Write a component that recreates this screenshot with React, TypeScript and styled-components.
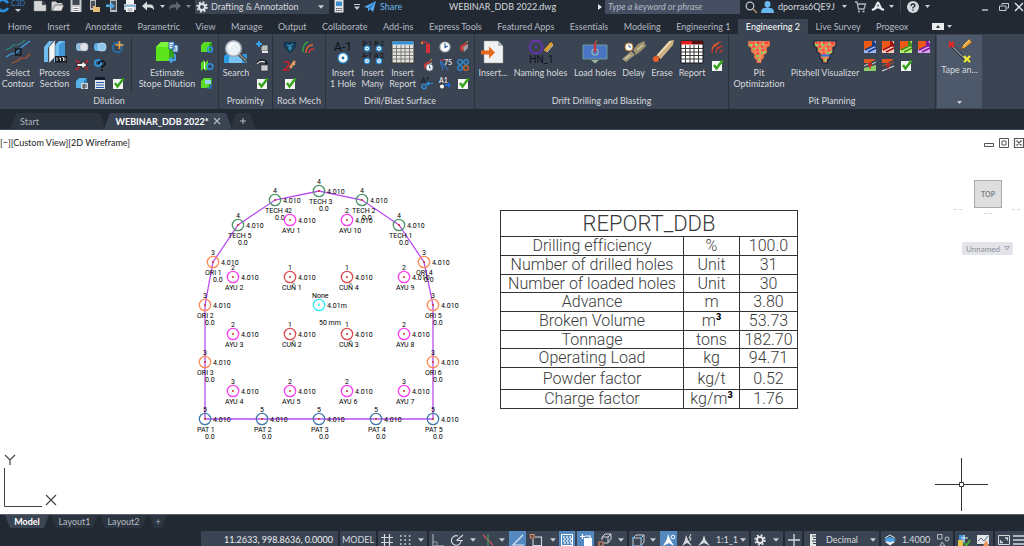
import React from "react";
import styled, { createGlobalStyle, css } from "styled-components";

const GlobalStyle = createGlobalStyle`
  * { box-sizing: border-box; }
  body { margin: 0; background: #222933; font-variant-ligatures: none; }
  body, button, input, select { font-family: Lato, "Open Sans", sans-serif; font-size: 9px; }
  button { appearance: none; border: 0; padding: 0; margin: 0; background: none; color: inherit; cursor: pointer; font-variant-ligatures: none; }
  svg { display: block; flex: none; overflow: visible; }
`;

const Page = styled.div`
  min-height: 100vh;
  display: flex;
  flex-direction: column;
  background: #222933;
  color: #d5d9de;
  overflow: hidden;
`;

/* ---------- title bar ---------- */

const TitleBar = styled.header`
  display: flex;
  align-items: center;
  height: 13px;
  margin-bottom: 6px;
  white-space: nowrap;
`;
const Cell = styled.div<{ $w: number }>`
  width: ${(p) => p.$w}px;
  height: 13px;
  flex: none;
  display: flex;
  align-items: center;
  justify-content: center;
`;
const CellButton = styled.button<{ $w: number }>`
  width: ${(p) => p.$w}px;
  height: 13px;
  flex: none;
  display: flex;
  align-items: center;
  justify-content: center;
`;
const AppLogo = styled.button`
  display: flex;
  align-items: flex-start;
  width: 31px;
  height: 13px;
  flex: none;
`;
const Workspace = styled.label`
  display: flex;
  align-items: center;
  width: 134px;
  height: 14px;
  flex: none;
  padding: 0 5px 0 1px;
  gap: 3px;
  background: #3b4453;
`;
const PlainSelect = styled.select`
  appearance: none;
  flex: 1;
  min-width: 0;
  height: 13px;
  border: 0;
  padding: 0;
  background: none;
  color: #d5d9de;
`;
const Share = styled.button`
  display: flex;
  align-items: center;
  gap: 4px;
  width: 41px;
  color: #6cb8ea;
`;
const FileName = styled.div`
  flex: 1;
  text-align: center;
  padding-left: 6px;
`;
const SearchInput = styled.input`
  width: 135px;
  height: 14px;
  border: 0;
  padding: 0 3px;
  background: #454f61;
  color: #d5d9de;
  font-style: italic;
  &::placeholder { color: #b4bac3; opacity: 1; }
`;
const Account = styled.button`
  display: flex;
  align-items: center;
  gap: 4px;
  width: 76px;
`;
const Divider = styled.span`
  width: 1px;
  height: 13px;
  background: #3b4453;
`;

/* ---------- ribbon ---------- */

const RibbonTabs = styled.nav`
  display: flex;
  height: 15px;
  padding-bottom: 1px;
`;
const RibbonTabList = styled.div`
  display: flex;
  flex: 0 1 916px;
`;
const RibbonTab = styled.button<{ $on?: boolean }>`
  flex: 1 0 auto;
  height: 15px;
  padding: 0 6px;
  line-height: 15px;
  white-space: nowrap;
  color: ${(p) => (p.$on ? "#ffffff" : "#b4bac2")};
  background: ${(p) => (p.$on ? "#3b4453" : "none")};
`;
const RibbonToggle = styled.button`
  display: flex;
  align-items: center;
  gap: 3px;
  margin-left: 16px;
`;
const Ribbon = styled.div`
  display: flex;
  height: 75px;
  background: #3b4453;
`;
const Group = styled.section<{ $w: number }>`
  width: ${(p) => p.$w}px;
  flex: none;
  display: flex;
  flex-direction: column;
  border-right: 1px solid #2b323d;
`;
const GroupBody = styled.div<{ $pad?: number }>`
  display: flex;
  height: 59px;
  padding: 4px 0 0 ${(p) => p.$pad ?? 0}px;
`;
const GroupTitle = styled.div`
  text-align: center;
  line-height: 16px;
`;
const BigButton = styled.button<{ $w: number }>`
  display: flex;
  flex-direction: column;
  align-items: center;
  width: ${(p) => p.$w}px;
  flex: none;
  height: 52px;
  padding-top: 2px;
  line-height: 11px;
  white-space: nowrap;
  svg { margin-bottom: 3px; }
`;
const Tools = styled.div<{ $cols: number }>`
  display: grid;
  grid-template-columns: repeat(${(p) => p.$cols}, 18px);
  grid-auto-rows: 18px;
  flex: none;
`;
const toolBox = css`
  display: flex;
  align-items: center;
  justify-content: center;
`;
const Tool = styled.button`${toolBox}`;
const TickLabel = styled.label`
  ${toolBox}
  position: relative;
`;
const HiddenInput = styled.input`
  position: absolute;
  opacity: 0;
  margin: 0;
`;
const InnerRule = styled.span`
  width: 1px;
  height: 55px;
  margin: 0 4px;
  background: #2b323d;
`;
const TapePanel = styled.button`
  display: flex;
  flex-direction: column;
  align-items: center;
  width: 45px;
  height: 73px;
  margin: 1px;
  padding: 4px 0;
  background: #4d596b;
  line-height: 13px;
  svg:last-child { margin-top: auto; }
`;

/* ---------- document tabs ---------- */

const FileTabs = styled.nav`
  display: flex;
  align-items: flex-end;
  height: 21px;
  padding-left: 10px;
  border-bottom: 1px solid #3b4453;
`;
const FileTab = styled.button<{ $w: number; $on?: boolean }>`
  display: flex;
  align-items: center;
  justify-content: ${(p) => (p.$on ? "center" : "flex-start")};
  gap: 6px;
  width: ${(p) => p.$w}px;
  height: 16px;
  padding: 0 10px;
  margin-right: -2px;
  border-radius: 8px 8px 0 0;
  white-space: nowrap;
  clip-path: polygon(6px 0, calc(100% - 6px) 0, 100% 100%, 0 100%);
  color: ${(p) => (p.$on ? "#ffffff" : "#aeb4bd")};
  font-weight: ${(p) => (p.$on ? 700 : 400)};
  background: ${(p) => (p.$on ? "#3b4453" : "#2c343f")};
`;

/* ---------- drawing canvas ---------- */

const Canvas = styled.main`
  position: relative;
  flex: 1;
  min-height: 384px;
  background: #ffffff;
  color: #111111;
  overflow: hidden;
`;
const CanvasBar = styled.div`
  display: flex;
  justify-content: space-between;
  align-items: center;
  height: 25px;
`;
const ViewLabel = styled.div`
  color: #222222;
`;
const WindowButtons = styled.div`
  display: flex;
  gap: 5px;
`;
const BlastPlan = styled.svg`
  position: absolute;
  left: 190px;
  top: 40px;
`;
const ReportTable = styled.table`
  position: absolute;
  left: 500px;
  top: 80px;
  width: 298px;
  table-layout: fixed;
  border-collapse: collapse;
  font-family: Roboto, Lato, sans-serif;
  font-size: 16px;
  font-weight: 300;
  line-height: 16px;
  color: #3a3a3a;
  th, td {
    border: 1px solid #333333;
    padding: 0;
    text-align: center;
    font-weight: 300;
    white-space: nowrap;
    overflow: hidden;
  }
  thead th { font-size: 22px; height: 26px; line-height: 24px; }
  sup { font-size: 9px; line-height: 0; font-weight: 900; color: #000000; }
`;
const ReportRow = styled.tr<{ $h: number }>`
  height: ${(p) => p.$h}px;
`;
const Cube = styled.button`
  position: absolute;
  right: 22px;
  top: 50px;
  width: 28px;
  height: 28px;
  border: 1px solid #a8a8a8;
  background: #dedede;
  color: #7b8288;
  font-size: 7px;
  font-weight: 700;
`;
const Compass = styled.svg`
  position: absolute;
  right: 2px;
  top: 77px;
`;
const UcsButton = styled.button`
  position: absolute;
  right: 11px;
  top: 112px;
  display: flex;
  align-items: center;
  gap: 4px;
  width: 51px;
  height: 13px;
  padding: 0 4px;
  border-radius: 2px;
  background: #e3e4ea;
  color: #8d9096;
  font-size: 8px;
`;
const UcsIcon = styled.svg`
  position: absolute;
  left: 0;
  bottom: 0;
`;
const Crosshair = styled.svg`
  position: absolute;
  left: 935px;
  top: 328px;
`;

/* ---------- bottom bars ---------- */

const LayoutTabs = styled.nav`
  display: flex;
  height: 17px;
  padding-left: 5px;
  border-top: 1px solid #5a6069;
`;
const LayoutTab = styled.button<{ $w: number; $on?: boolean }>`
  width: ${(p) => p.$w}px;
  height: 13px;
  line-height: 12px;
  border-radius: 0 0 6px 6px;
  clip-path: polygon(0 0, 100% 0, calc(100% - 5px) 100%, 5px 100%);
  margin-right: 2px;
  color: ${(p) => (p.$on ? "#ffffff" : "#b4bac2")};
  font-weight: ${(p) => (p.$on ? 700 : 400)};
  background: ${(p) => (p.$on ? "#3b4453" : "#2c343f")};
`;
const StatusBar = styled.footer`
  display: flex;
  justify-content: flex-end;
  gap: 2px;
  height: 15px;
  overflow: hidden;
`;
const StatusGroup = styled.div`
  display: flex;
  height: 18px;
  background: #3b4453;
`;
const StatusText = styled.div<{ $w: number }>`
  width: ${(p) => p.$w}px;
  height: 18px;
  line-height: 17px;
  padding-right: 5px;
  text-align: right;
  white-space: nowrap;
  color: #eef0f2;
`;
const StatusButton = styled.button<{ $w: number; $on?: boolean }>`
  display: flex;
  align-items: center;
  justify-content: center;
  width: ${(p) => p.$w}px;
  height: 17px;
  color: #d5d9de;
  background: ${(p) => (p.$on ? "#5489c0" : "none")};
`;
const StatusSelect = styled.label<{ $w: number }>`
  display: flex;
  align-items: center;
  width: ${(p) => p.$w}px;
  height: 17px;
  padding: 0 3px 0 4px;
`;

/* ---------- icons ---------- */

const Caret = ({ c = "#c9cdd3", s = 5 }: { c?: string; s?: number }) => (
  <svg width={s} height={s - 2} viewBox="0 0 6 3.6"><path d="M0 0H6L3 3.6Z" fill={c} /></svg>
);

const Svg = ({ s, children }: { s: number; children: React.ReactNode }) => (
  <svg width={s} height={s} viewBox={`0 0 ${s} ${s}`} fill="none">{children}</svg>
);

const Gear = ({ s = 12, c = "#e3e6e9" }) => (
  <svg width={s} height={s} viewBox="0 0 12 12" fill="none" stroke={c}>
    <circle cx="6" cy="6" r="3" strokeWidth="2" />
    <circle cx="6" cy="6" r="4.8" strokeWidth="1.8" strokeDasharray="1.9 1.87" />
  </svg>
);

const titleIcons: Record<string, React.ReactNode> = {
  New: <path d="M1 1H9L13 5V11H1ZM9 1V5H13" fill="#d6d6d6" stroke="#8e9399" strokeWidth=".6" />,
  Open: <><path d="M1 11V2H5L6 3.5H11V5" fill="#d6d6d6" stroke="#c9c9c9" /><path d="M1 11L4 5H13L10.500 11Z" fill="#e2e2e2" stroke="#33373d" strokeWidth=".6" /></>,
  Save: <><path d="M1.500 0H12.500V12H1.500Z" fill="#c6c8ca" /><path d="M3.500 0H10.500V5H3.500Z" fill="#3f464f" /><path d="M3.500 7H10.500V12H3.500Z" fill="#f4f4f4" /><path d="M4.500 8.500H9.500M4.500 10.500H9.500" stroke="#666" strokeWidth=".8" /></>,
  "Open from mobile": <><path d="M3 0H9V10H3Z" fill="#b9bcc0" /><path d="M4 1H8V8H4Z" fill="#4a515b" /><path d="M6 6H8L9 7H13V12H6Z" fill="#e6bd73" /></>,
  "Save to mobile": <><path d="M5 0H12V12H5Z" fill="#b9bcc0" /><path d="M6 1H11V10H6Z" fill="#4a515b" /><path d="M1 4.500H6V2.500L10 6L6 9V7H1Z" fill="#4aa9e6" /></>,
  Plot: <><path d="M3 0H11V5H3Z" fill="#f3f3f3" /><path d="M1 4H13V10H1Z" fill="#c9ccd0" /><path d="M3 7H11V12H3Z" fill="#fff" /><path d="M1 6H13" stroke="#4b9fdc" /><path d="M4.500 9H9.500M4.500 10.800H9.500" stroke="#777" strokeWidth=".8" /></>,
  Undo: <path d="M1 6L6 1.500V4.500H10Q13 5 13 10Q11.500 7.500 9 7.500H6V10.500Z" fill="#dadde0" />,
  Redo: <path d="M13 6L8 1.500V4.500H4Q1 5 1 10Q2.500 7.500 5 7.500H8V10.500Z" fill="#5d6571" />,
  Calculator: <><path d="M2.500 0H11.500V12.500H2.500Z" fill="#e3e5e7" /><path d="M4 1.500H10V6H4Z" fill="#3b8fd0" /><path d="M4 8.500H10M4 10.500H10" stroke="#555" strokeDasharray="1.500 .7" /></>,
};

const tb = (name: string, w: number) => (
  <CellButton key={name} $w={w} aria-label={name}><Svg s={14}>{titleIcons[name]}</Svg></CellButton>
);

const Pit = ({ blue = false }: { blue?: boolean }) => (
  <>
    <path d="M1 1H23V6L20 7.500V13L17 15V18L14.500 20V23H9.500V20L7 18V14L4 12V8L1 6Z" fill="#f2784f" stroke={blue ? "#10283e" : "#6b4a45"} strokeWidth={blue ? 1.200 : 0.4} />
    <path d="M3 3H7M10 3H14M17 3H21M5 6.500H9M13 6.500H18M8 10H11M15 10H18M9 13.500H12" stroke="#ff4444" strokeWidth="2.200" />
    <path d="M2 5H5M8 5H11M15 4.500H17M6 9H8M12 8.500H14M17 12H19M9 16H12M14 13H16M11 20H13" stroke="#78d651" strokeWidth="2" />
    <path d="M5 1V7M9 1V14M13 1V22M17 1V14" stroke="#e8d4a0" strokeWidth=".5" />
    {blue && <path d="M8 15.500H17" stroke="#2d6de0" strokeWidth="2" />}
  </>
);

const Dot = ({ x, y, r }: { x: number; y: number; r: number }) => (
  <>
    <circle cx={x} cy={y} r={r} fill="#fff" stroke="#2793dd" strokeWidth="1.200" />
    <circle cx={x} cy={y} r={r / 3.5} fill="#1c6fb5" />
  </>
);

const big: Record<string, React.ReactNode> = {
  contour: <>
    <path d="M0 10L4 8L7 5L12 5L17 2L19 0" stroke="#2c8a82" strokeWidth="1.200" />
    <path d="M0 17L5 14L10 13L17 6L24 1" stroke="#3aa0ea" strokeWidth="1.200" />
    <path d="M6 23L11 21L15 18L20 18L24 14" stroke="#b5562c" strokeWidth="1.200" />
    <path d="M9.500 9H15V15H9.500Z" stroke="#12181f" strokeWidth="1.400" />
  </>,
  section: <>
    <path d="M1 7L6 1H10L5 8V22H1ZM13 4L16 1H22V16L17 22H11V7Z" fill="#6fbdee" />
    <path d="M16 5L22 1V16L16 22Z" fill="#3f96d6" />
    <path d="M6 7L12 0V17L6 23Z" fill="#f6f6f6" stroke="#56616e" strokeWidth=".6" />
    <path d="M12 16H24V22.500H12Z" fill="#15181c" />
    <path d="M14 17.500V21M16 18H17.500V21M19 17.500H20.500V21M22 17.500V21" stroke="#fff" strokeWidth=".8" />
  </>,
  stope: <>
    <path d="M1 7L6 2H19L14 7V21H1Z" fill="#5be31c" /><path d="M1 7L6 2H19L14 7Z" fill="#7cf43e" /><path d="M14 7L19 2V17L14 21Z" fill="#36a80d" />
    <path d="M14 2H19V9H14ZM18 5H23V12H18Z" fill="#e8f2fb" stroke="#2463a8" strokeWidth="1" />
    <path d="M15.500 4.500H17.500M15.500 6.500H17.500M19.500 8H21.500M19.500 10H21.500" stroke="#2463a8" strokeWidth=".8" />
    <path d="M20 14V20H15M17 17.500L14.500 20L17 22.500" stroke="#4aa6ea" strokeWidth="1.800" />
  </>,
  search: <>
    <path d="M0 16L5 12H10V23H0ZM14 14H23V23H12Z" fill="#2b9ae0" /><path d="M5 17L12 14L18 19V23H5Z" fill="#78c3f0" />
    <path d="M15 14L22.500 21.500" stroke="#4c3a30" strokeWidth="3.200" /><path d="M15 14L22 21" stroke="#8a929b" strokeWidth="1.500" />
    <circle cx="9.500" cy="8.500" r="7.800" fill="#e9f1f7" stroke="#a3acb5" strokeWidth="1.600" />
    <path d="M5 8Q6 4 10 3.500" stroke="#fff" strokeWidth="2" />
  </>,
  hole: <>
    <text x="12" y="10.500" textAnchor="middle" fontSize="12" fill="#0c1015" fontFamily="Roboto">A-1</text>
    <Dot x={12} y={18} r={5} />
  </>,
  many: <>
    {[[6, "B-1", 5.5], [18, "B-2", 5.5], [6, "A-1", 17.5], [18, "A-2", 17.5]].map(([x, t, y]) => (
      <text key={String(t)} x={x} y={y} textAnchor="middle" fontSize="7" fill="#0c1015" fontFamily="Roboto">{t}</text>
    ))}
    <Dot x={6} y={8.500} r={2.600} /><Dot x={18} y={8.500} r={2.600} /><Dot x={6} y={21} r={2.600} /><Dot x={18} y={21} r={2.600} />
  </>,
  grid: <>
    <path d="M1 1H23V23H1Z" fill="#e3e3e1" stroke="#39352f" /><path d="M1.500 1.500H22.500V4.500H1.500Z" fill="#2f92dd" />
    <path d="M1 8.500H23M1 12H23M1 15.500H23M1 19H23M5.500 5V23M10 5V23M14 5V23M18.500 5V23" stroke="#7b7973" />
  </>,
  insert: <>
    <path d="M3 1H17L22 6V23H3Z" fill="#f0f1f2" stroke="#8c9197" strokeWidth=".5" /><path d="M17 1V6H22Z" fill="#b5bac0" />
    <path d="M0 10.500H8V6.500L14 12.500L8 18.500V14.500H0Z" fill="#e4691d" />
  </>,
  naming: <>
    <circle cx="7" cy="7" r="6.500" stroke="#7130c4" strokeWidth="1.400" /><circle cx="7" cy="7" r="1" fill="#7130c4" />
    <path d="M16 11L23 3" stroke="#e0a030" strokeWidth="3.200" /><path d="M18 12L24 5" stroke="#f6e3b0" strokeWidth="1" />
    <text x="12.500" y="22.500" textAnchor="middle" fontSize="10" fill="#0c1015" fontFamily="Roboto">HN_1</text>
  </>,
  load: <>
    <path d="M0 5H24V19H0Z" fill="#4a74c4" stroke="#6c9a9f" strokeWidth="1" />
    <path d="M8 20H16L12 23.500Z" fill="#9fb59a" />
    <circle cx="12" cy="12" r="3" stroke="#8fa8b8" strokeWidth="1.500" /><path d="M12 3V12" stroke="#c8343c" strokeWidth="2.400" /><path d="M12 3L14 0" stroke="#b86a30" />
  </>,
  delay: <>
    <path d="M0 19L6 14L9 11L13 15L9 18L4 22Z" fill="#a59a7c" /><path d="M11 10L16 4L22 1L24 6L19 11L14 15Z" fill="#9a916f" />
    <path d="M3 19L8 15M15 10L21 5" stroke="#cfc6a4" strokeWidth="1.600" />
    <circle cx="7" cy="7" r="4" fill="#fff" stroke="#c88438" strokeWidth="1" /><path d="M7 4.500V7H9" stroke="#4a6fa8" />
  </>,
  erase: <>
    <path d="M6 16L19 1L24 0L23 5L10 20Z" fill="#cdb083" /><path d="M7 16L21 1" stroke="#f5e2bd" strokeWidth="1.500" />
    <path d="M6 16L10 20" stroke="#2f251c" strokeWidth="2" /><circle cx="6" cy="19" r="3" fill="#e6602a" />
  </>,
  report: <>
    <path d="M1 1H23V23H1Z" fill="#fff" stroke="#17191c" /><path d="M1 1H12V4.500H1Z" fill="#e01b1b" /><path d="M12 1H23V4.500H12Z" fill="#5a0c0c" />
    <path d="M1 8.500H23M1 12H23M1 15.500H23M1 19H23M5.500 5V23M10 5V23M14 5V23M18.500 5V23" stroke="#3a3a3a" />
  </>,
  pit: <Pit />,
  pitshell: <Pit blue />,
  tape: <>
    <path d="M4 7L18 21" stroke="#1e2329" strokeWidth="3" /><path d="M4 7L18 21" stroke="#9aa3ad" strokeWidth="1.200" />
    <path d="M1 3L6 8M6 3L1 8" stroke="#ef2020" strokeWidth="2" />
    <path d="M16 17L22 23M22 17L16 23" stroke="#f5f02a" strokeWidth="2" />
    <path d="M13 10L15 6L21 0L24 3L17 9Z" fill="#eea63a" stroke="#6b4315" strokeWidth=".6" /><path d="M15 7L21.500 1" stroke="#f9dc9a" />
  </>,
};

const Cube12 = ({ c, d }: { c: string; d: string }) => (
  <><path d="M0 4L3 1H11L8 4V11H0Z" fill={c} /><path d="M8 4L11 1V8L8 11Z" fill={d} /></>
);
const RedStick = () => <><path d="M3 5L8 2L11 4L6 11L3 9Z" fill="#c33a34" /><path d="M6 6L11 3V7L7 11Z" fill="#9c9fa3" /><path d="M9 2L11 0" stroke="#e8a040" /></>;
const Bench = ({ c, d }: { c: string; d: string }) => (
  <>
    <path d="M0 0H12V12H0Z" fill={c} />
    <path d="M0 0H10L12 3V6L0 2Z" fill={d} />
    <path d="M0 0H8V5L3 9H0Z" fill="#ee5a16" />
    <path d="M1 9L11 4M4 11L12 7" stroke={d} strokeWidth="1.400" />
  </>
);

const small: Record<string, React.ReactNode> = {
  union: <><rect y="2" width="8" height="8" rx="3" fill="#8fbde0" /><rect x="4" y="2" width="8" height="8" rx="3" fill="#dfe3e6" stroke="#9ba5ae" strokeWidth=".6" /></>,
  subtract: <><rect y="2" width="8" height="8" rx="3" fill="#5fb0e6" /><rect x="4" y="2" width="8" height="8" rx="3" fill="#8fc6ec" stroke="#d9e7f2" strokeWidth=".6" /></>,
  pick: <><circle cx="5.500" cy="6.500" r="4.800" stroke="#1f78be" strokeWidth="1.400" /><path d="M7.500 0V8M3.500 4H11.500" stroke="#f2a74a" strokeWidth="1.600" /></>,
  mirror: <><path d="M0 1L5 6L0 11M12 1L8 6L12 11" stroke="#bb2430" strokeWidth="1.800" /><path d="M1 4.500H6V2L11 6L6 10V7.500H1Z" fill="#f2f2f2" stroke="#15181c" strokeWidth=".8" /></>,
  help: <><circle cx="4" cy="4" r="3" stroke="#2f93dc" strokeWidth="2" /><path d="M5 5Q5 2 8 2Q11 2 11 5Q11 6.500 8 7.500V9M8 10V12" stroke="#10151b" strokeWidth="1.600" /></>,
  solid: <><Cube12 c="#55b0ea" d="#2e83c2" /><path d="M5 6H12V12H5Z" fill="#d3d7da" /><path d="M6 8H11M6 10H11M8 7V12" stroke="#252a30" strokeWidth=".8" /></>,
  list: <><path d="M1 0H11V12H1Z" fill="#e5e7e9" /><path d="M1 0H11V3H1Z" fill="#141c2c" /><path d="M2 5.500H10M2 8H10M2 10.500H10" stroke="#1f5dae" /></>,
  greenA: <><Cube12 c="#58dc25" d="#319b0f" /><circle cx="9" cy="8.500" r="2.500" stroke="#2d93e2" strokeWidth="1.500" /></>,
  greenB: <><path d="M0 4L3 1V9L0 12ZM4 4L7 1V10L4 12Z" fill="#58dc25" /><path d="M3 3L4 2V10L3 11Z" fill="#eef2ee" /><circle cx="9" cy="7.500" r="2.800" stroke="#2d93e2" strokeWidth="1.500" /></>,
  greenC: <><Cube12 c="#58dc25" d="#319b0f" /><path d="M4 3H10V7H4Z" fill="#9bd2f3" /><path d="M10 7V11H6" stroke="#2876c4" strokeWidth="1.400" /></>,
  plusBox: <><path d="M3 0V6M0 3H6" stroke="#3aa2ea" strokeWidth="2" /><path d="M5 6L7 4H12V10H5Z" fill="#b9bcbe" stroke="#2b2f33" strokeWidth=".6" /><path d="M6 10H12V12H6Z" fill="#e6e6e6" /></>,
  rotBox: <><path d="M1 5Q4 0 9 2L11 5" stroke="#15181c" strokeWidth="2.400" /><path d="M1 5Q4 1 9 3" stroke="#f2f2f2" strokeWidth="1.200" /><path d="M5 6H12V12H5Z" fill="#c9cccd" stroke="#2b2f33" strokeWidth=".6" /></>,
  rock: <><path d="M1 1L6 2L11 1L12 5L6 12L0 5Z" fill="#15425f" stroke="#0f2d43" /><path d="M3 4L6 5L9 3M4 7L8 7M6 5V10" stroke="#4aa6d8" /></>,
  arcs: <><path d="M1 11Q1 2 6 1" stroke="#2da63c" strokeWidth="1.400" /><path d="M4 12Q4 4 11 4" stroke="#e2622a" strokeWidth="1.400" /><path d="M7 12Q7 8 12 8" stroke="#d63636" strokeWidth="1.400" /></>,
  two: <><path d="M0 4Q3 1 5 4Q5 7 0 11H6" stroke="#c8202a" strokeWidth="1.600" /><path d="M5 8L10 1L12 3L7 10Z" fill="#d98f57" /><path d="M9 4L11 6" stroke="#f4d9a9" /></>,
  fuse: <><path d="M5 3H9V12H5Z" fill="#d92f36" /><path d="M1 1Q5 0 7 3" stroke="#c2343a" strokeWidth="1.500" /><circle cx="1" cy="2" r="1.200" fill="#f0803a" /></>,
  clock: <><circle cx="6" cy="6" r="5" fill="#fff" stroke="#b0b6bd" strokeWidth="1.200" /><path d="M6 2.500V6.500L9 5" stroke="#265a9c" strokeWidth="1.200" /></>,
  stick: <RedStick />,
  stickClock: <><RedStick /><circle cx="8.500" cy="8.500" r="3.500" fill="#fff" stroke="#7f868e" /><path d="M8.500 6.500V9H10" stroke="#265a9c" /></>,
  angle: <><path d="M1 1L4 11M1 1L9 11" stroke="#2f74c8" strokeWidth="1.200" /><path d="M1 1H7" stroke="#c8323a" /><text x="5" y="6" fontSize="7" fontWeight="700" fill="#e5e7e9" fontFamily="Lato">75</text></>,
  rings: <><circle cx="3" cy="3" r="2.300" stroke="#2f8ed8" strokeWidth="1.300" /><circle cx="9" cy="3" r="2.300" stroke="#2f8ed8" strokeWidth="1.300" /><circle cx="3" cy="9" r="2.300" stroke="#2f8ed8" strokeWidth="1.300" /><circle cx="9" cy="9" r="2.300" stroke="#d0632c" strokeWidth="1.300" /></>,
  a1in: <><text x="0" y="6" fontSize="7" fill="#10151b" fontFamily="Lato">A1</text><circle cx="3" cy="9.500" r="2.200" stroke="#2f8ed8" strokeWidth="1.300" /><path d="M12 6H8V4L5 6.500L8 9V7H12Z" fill="#2b90e0" /></>,
  a1out: <><text x="0" y="6" fontSize="7" fill="#fff" fontFamily="Lato">A1</text><circle cx="3" cy="9.500" r="2" fill="#fff" /><path d="M6 7H9V5L12 8L9 11V9H6Z" fill="#1e6be0" /></>,
  branches: <><path d="M1 12Q1 5 4 3M4 6Q7 1 10 1M5 12Q5 7 8 6M7 8Q9 5 12 5M9 12Q9 10 12 9" stroke="#d8392a" strokeWidth="1.200" /><path d="M1 8L5 3L8 2" stroke="#ea7a32" /></>,
  benchBlue: <Bench c="#9fb9f0" d="#1b3a86" />,
  benchRed: <Bench c="#f8c9be" d="#a01010" />,
  benchGreen: <Bench c="#b6ee76" d="#3f8a1c" />,
  benchPurple: <Bench c="#dfa2ee" d="#7a1c9c" />,
  raiseA: <><path d="M0 0H12L6 4H0Z" fill="#e2571d" /><path d="M0 9L12 6V12H0Z" fill="#8ecb6c" /><path d="M6 10V4M4 6.500L6 4L8 6.500" stroke="#dd2020" strokeWidth="1.400" /><path d="M0 7L4 5M8 5L12 3" stroke="#d9dcdf" /></>,
  raiseB: <><path d="M0 0H12L6 4H0Z" fill="#e2571d" /><path d="M0 12L12 7" stroke="#d9dcdf" strokeWidth="1.200" /><path d="M6 10V4M4 6.500L6 4L8 6.500" stroke="#dd2020" strokeWidth="1.400" /><path d="M0 7L5 5M8 5L12 3" stroke="#b5552f" /></>,
};

const Tick = ({ label }: { label: string }) => (
  <TickLabel>
    <HiddenInput type="checkbox" defaultChecked aria-label={label} />
    <Svg s={12}>
      <path d="M1 2H11V12H1Z" fill="#f3f4f3" />
      <path d="M3 6L5.500 9.500L11.500 1.500" stroke="#35a31a" strokeWidth="2.400" />
    </Svg>
  </TickLabel>
);

const ToolGrid = ({ cols, items, label }: { cols: number; items: string[]; label: string }) => (
  <Tools $cols={cols}>
    {items.map((k, i) =>
      k === "tick" ? <Tick key={i} label={`${label} settings`} /> :
      k === "" ? <span key={i} /> :
      <Tool key={i} aria-label={k}><Svg s={12}>{small[k]}</Svg></Tool>
    )}
  </Tools>
);

const Cmd = ({ w, icon, a, b }: { w: number; icon: string; a: string; b?: string }) => (
  <BigButton $w={w}><Svg s={24}>{big[icon]}</Svg><span>{a}</span>{b && <span>{b}</span>}</BigButton>
);

/* ---------- data ---------- */

const ribbonTabs = ["Home", "Insert", "Annotate", "Parametric", "View", "Manage", "Output", "Collaborate", "Add-ins", "Express Tools", "Featured Apps", "Essentials", "Modeling", "Engineering 1", "Engineering 2", "Live Survey", "Progeox"];

const GREEN = "#4a9468", ORANGE = "#ff8a55", PINK = "#fb3df3", RED = "#dc4b50", BLUE = "#4179ab";

type Hole = [number, number, string, string, string];
const holes: Hole[] = [
  [129, 21, "4", "TECH 3", GREEN], [85, 30, "4", "TECH 4", GREEN], [48, 55, "4", "TECH 5", GREEN],
  [172, 30, "4", "TECH 2", GREEN], [209, 55, "4", "TECH 1", GREEN],
  [23, 92, "3", "ORI 1", ORANGE], [234, 92, "3", "ORI 4", ORANGE], [15, 135, "3", "ORI 2", ORANGE],
  [243, 135, "3", "ORI 5", ORANGE], [15, 192, "3", "ORI 3", ORANGE], [243, 192, "3", "ORI 6", ORANGE],
  [15, 249, "5", "PAT 1", BLUE], [72, 249, "5", "PAT 2", BLUE], [129, 249, "5", "PAT 3", BLUE],
  [186, 249, "5", "PAT 4", BLUE], [243, 249, "5", "PAT 5", BLUE],
  [100, 50, "2", "AYU 1", PINK], [157, 50, "2", "AYU 10", PINK], [43, 107, "2", "AYU 2", PINK],
  [214, 107, "2", "AYU 9", PINK], [43, 164, "2", "AYU 3", PINK], [214, 164, "2", "AYU 8", PINK],
  [43, 221, "3", "AYU 4", PINK], [100, 221, "2", "AYU 5", PINK], [157, 221, "2", "AYU 6", PINK], [214, 221, "3", "AYU 7", PINK],
  [100, 107, "1", "CUÑ 1", RED], [157, 107, "1", "CUÑ 4", RED], [100, 164, "1", "CUÑ 2", RED], [157, 164, "1", "CUÑ 3", RED],
];

const HoleMark = ({ h: [x, y, n, name, c] }: { h: Hole }) => {
  const contour = c === GREEN || c === ORANGE || c === BLUE;
  return (
    <g>
      <circle cx={x} cy={y} r="5.700" fill="none" stroke={c} strokeWidth="1.300" />
      <path d={`M${x - 1} ${y}h2`} stroke="#c63a20" strokeWidth="1.500" />
      <text x={x - 2} y={y - 7}>{n}</text>
      <text x={x + 8} y={y + 3}>4.010</text>
      <text x={c === GREEN ? x - 10 : x - 8} y={y + 13}>{name}</text>
      {contour && <text x={x} y={y + 20}>0.0</text>}
    </g>
  );
};

const report: [React.ReactNode, React.ReactNode, string, number][] = [
  ["Drilling efficiency", "%", "100.0", 19],
  ["Number of drilled holes", "Unit", "31", 19],
  ["Number of loaded holes", "Unit", "30", 18],
  ["Advance", "m", "3.80", 19],
  ["Broken Volume", <>m<sup>3</sup></>, "53.73", 19],
  ["Tonnage", "tons", "182.70", 18],
  ["Operating Load", "kg", "94.71", 19],
  ["Powder factor", "kg/t", "0.52", 22],
  ["Charge factor", <>kg/m<sup>3</sup></>, "1.76", 19],
];

const st: Record<string, React.ReactNode> = {
  grid: <path d="M3.500 0V12M8.500 0V12M0 3.500H12M0 8.500H12" stroke="#d5d9de" strokeWidth="1.200" />,
  snap: <path d="M1 2H12M1 6H12M1 10H12" stroke="#d5d9de" strokeWidth="1.600" strokeDasharray="1.600 2.800" />,
  ortho: <><path d="M1 0V12H12" stroke="#9aa1aa" strokeWidth="1.300" /><path d="M1 8H5V12" stroke="#9aa1aa" /></>,
  polar: <><path d="M10 6A4.800 4.800 0 1 1 7 2M5.500 6.500L12 1M5.500 6.500H12" stroke="#d5d9de" strokeWidth="1.100" /></>,
  iso: <><path d="M1 1L11 11" stroke="#d4505a" strokeWidth="1.200" /><path d="M6 0V12" stroke="#4c9a5c" strokeWidth="1.200" /></>,
  track: <path d="M11 1L1 11H12" stroke="#dfe8f2" strokeWidth="1.200" />,
  osnap: <><path d="M5 3H11.500V11.500H3V5" stroke="#d5d9de" strokeWidth="1.100" /><path d="M.5 .5H4V4H.5Z" stroke="#e58a5c" strokeWidth="1.200" /></>,
  trans: <><path d="M.5 .5H11.500V11.500H.5Z" stroke="#fff" /><path d="M2 3H10M2 7H10M3 5H11M3 9H11" stroke="#fff" strokeWidth="1.600" strokeDasharray="1.600 1.600" /></>,
  cycle: <><path d="M4 4H12V12H4Z" fill="#fff" /><path d="M0 2.500H5M2.500 0V5M5 2H10V4" stroke="#fff" strokeWidth="1.200" /></>,
  snap3d: <><path d="M3 3L6 0H12V5L9 9H5M3 3H9V8M9 3L12 0M3 3V6" stroke="#d5d9de" /><path d="M0 8H4V12H0Z" stroke="#e58a5c" strokeWidth="1.200" /></>,
  ucs: <><path d="M1 4L4 1H12V8L9 12H1ZM1 4H9V12M9 4L12 1" stroke="#c9cdd3" /><path d="M0 3H2V5H0ZM8 3H10V5H8ZM0 11H2V13H0ZM8 11H10V13H8Z" fill="#4aa6ea" /></>,
  annoOn: <><path d="M5 0L7 5L11 12L6 9L0 12L4 5Z" fill="#fff" /><circle cx="10" cy="3" r="1.800" stroke="#fff" /></>,
  anno: <><path d="M5 1L7 6L11 12L6 9L1 12L4 6Z" fill="#d5d9de" /><path d="M10 0L8 4H10L9 7" stroke="#d5d9de" /></>,
  annoA: <path d="M6 1L7.500 6L12 12L6 9L0 12L4.500 6Z" fill="#d5d9de" />,
  plus: <path d="M6 0V12M0 6H12" stroke="#d5d9de" strokeWidth="1.300" />,
  ruler: <><path d="M3 0H9V13H3Z" fill="#e3e5e7" /><path d="M5 2H9M6 4.500H9M5 7H9M6 9.500H9" stroke="#3b4453" /></>,
  layers: <><path d="M1 8L6 5L11 8L6 11.500Z" fill="#e8eaec" /><path d="M0 6Q6 0 12 6Q6 10 0 6Z" fill="#4aa0e6" /><path d="M1 4L6 1L11 4" stroke="#e8eaec" /></>,
  shapes: <><path d="M.5 .5H5V5H.5Z" stroke="#b9bec5" /><circle cx="10" cy="5" r="2" stroke="#b9bec5" /><path d="M3 12L5 8L8 12Z" stroke="#b9bec5" /></>,
  cad: <><path d="M1 1H7V9H1Z" fill="#3f8fd6" /><path d="M0 6H5V12H0Z" fill="#ecc04c" /><path d="M3 4H10M6 1V8" stroke="#e6eef6" /><path d="M6 9L8.500 11.500L12 6" stroke="#4aa83a" strokeWidth="2" /></>,
  perf: <><path d="M0 1H12V10H0Z" fill="#e3e5e7" /><path d="M1 7L4 4L7 7L11 2" stroke="#59728c" /><path d="M9 6L12 12H6Z" fill="#ee9458" /></>,
  full: <><path d="M.5 1.500H11.500V10.500H.5Z" stroke="#d5d9de" /><path d="M7 4H9.500V6.500M2.500 6V8.500H5" stroke="#d5d9de" strokeWidth="1.300" /></>,
  menu: <path d="M0 2H12M0 6H12M0 10H12" stroke="#d5d9de" strokeWidth="1.500" />,
};

const S = ({ k, w, on }: { k: string; w: number; on?: boolean }) => (
  <StatusButton $w={w} $on={on} aria-label={k}><Svg s={12}>{st[k]}</Svg></StatusButton>
);
const Drop = ({ w = 12 }: { w?: number }) => <StatusButton $w={w} aria-label="More options"><Caret s={6} /></StatusButton>;

export default function App() {
  return (
    <Page>
      <GlobalStyle />
      <TitleBar>
        <AppLogo aria-label="Application menu">
          <svg width="27" height="13" viewBox="0 0 27 13" fill="none">
            <path d="M8 3Q5-1 1 0Q-3 3-2 7Q0 12 4 11Q7 10 8 8" stroke="#2b8fe0" strokeWidth="2.600" />
            <text x="11" y="6" fontSize="7" fill="#3c7fc0" fontFamily="Lato">C3D</text>
            <path d="M15 9H21L18 12Z" fill="#c9cdd3" />
          </svg>
        </AppLogo>
        {["New", "Open", "Save", "Open from mobile", "Save to mobile", "Plot", "Undo"].map((n) => tb(n, 18))}
        <Cell $w={11}><Caret /></Cell>
        {tb("Redo", 14)}
        <Cell $w={13}><Caret c="#7d858f" /></Cell>
        <Workspace>
          <Gear />
          <PlainSelect aria-label="Workspace"><option>Drafting &amp; Annotation</option></PlainSelect>
          <Caret s={6} />
        </Workspace>
        {tb("Calculator", 20)}
        <Cell $w={15}><svg width="6" height="6" viewBox="0 0 6 6"><path d="M0 0H6V1H0ZM0 2.500H6L3 6Z" fill="#c9cdd3" /></svg></Cell>
        <Share>
          <svg width="12" height="11" viewBox="0 0 12 11"><path d="M0 6L12 0L9 11L6 8L4 10.500V7Z" fill="#55aaf0" /><path d="M4 7L12 0L6 8Z" fill="#2874b4" /></svg>
          Share
        </Share>
        <FileName>WEBINAR_DDB 2022.dwg</FileName>
        <Cell $w={11}><svg width="4" height="6" viewBox="0 0 4 6"><path d="M0 0V6L4 3Z" fill="#e3e6e9" /></svg></Cell>
        <SearchInput placeholder="Type a keyword or phrase" aria-label="Search help" />
        <CellButton $w={21} aria-label="Search"><Svg s={12}><circle cx="5" cy="5" r="3.800" stroke="#c0c5cb" strokeWidth="1.300" /><path d="M8 8L12 12" stroke="#a58a6a" strokeWidth="1.600" /></Svg></CellButton>
        <Account>
          <svg width="13" height="12" viewBox="0 0 13 12"><path d="M3.500 3Q3.500 0 6.500 0Q9.500 0 9.500 3Q9.500 6.500 6.500 7Q3.500 6.500 3.500 3ZM0 12Q0 7 4 7H9Q13 7 13 12Z" fill="#69b7ef" /></svg>
          dporras6QE9J
        </Account>
        <Cell $w={14}><Caret /></Cell>
        <CellButton $w={18} aria-label="Cart"><Svg s={12}><path d="M1 1H3L4.500 8H10L11.500 3H4" stroke="#aeb4bb" strokeWidth="1.300" /><circle cx="5" cy="10.500" r="1.100" fill="#aeb4bb" /><circle cx="9.500" cy="10.500" r="1.100" fill="#aeb4bb" /></Svg></CellButton>
        <CellButton $w={18} aria-label="Autodesk apps"><Svg s={12}><path d="M6 1L2 9M6 1L10 9M0 9L6 6L12 9" stroke="#e3e6e9" strokeWidth="2" /></Svg></CellButton>
        <Cell $w={9}><Caret /></Cell>
        <Cell $w={8}><Divider /></Cell>
        <CellButton $w={18} aria-label="Help"><Svg s={12}><circle cx="6" cy="6" r="6" fill="#d5d9de" /><path d="M4 5Q4 3 6 3Q8 3 8 4.500Q8 5.500 6 6.500V7.500M6 8.500V9.700" stroke="#222933" strokeWidth="1.300" /></Svg></CellButton>
        <Cell $w={10}><Caret /></Cell>
        <Cell $w={43} />
        <CellButton $w={20} aria-label="Minimize"><Svg s={6}><path d="M0 6H6" stroke="#d5d9de" strokeWidth="1.300" /></Svg></CellButton>
        <CellButton $w={18} aria-label="Restore"><svg width="10" height="8" viewBox="0 0 10 8" fill="none" stroke="#c9cdd3"><path d="M3 2V.5H9.500V5H7.500M.5 3H7V7.500H.5Z" /></svg></CellButton>
        <CellButton $w={11} aria-label="Close"><Svg s={8}><path d="M0 0L8 8M8 0L0 8" stroke="#e3e6e9" strokeWidth="1.300" /></Svg></CellButton>
      </TitleBar>

      <RibbonTabs>
        <RibbonTabList>
          {ribbonTabs.map((t) => <RibbonTab key={t} $on={t === "Engineering 2"}>{t}</RibbonTab>)}
        </RibbonTabList>
        <RibbonToggle aria-label="Minimize ribbon">
          <svg width="12" height="7" viewBox="0 0 12 7"><path d="M0 0H12V7H0Z" fill="#e9ebed" /><path d="M4 5H8L6 2Z" fill="#333" /></svg>
          <Caret />
        </RibbonToggle>
      </RibbonTabs>

      <Ribbon>
        <Group $w={219}>
          <GroupBody>
            <Cmd w={36} icon="contour" a="Select" b="Contour" />
            <Cmd w={37} icon="section" a="Process" b="Section" />
            <ToolGrid label="Dilution" cols={3} items={["union", "subtract", "pick", "mirror", "help", "", "solid", "list", "tick"]} />
            <InnerRule />
            <Cmd w={62} icon="stope" a="Estimate" b="Stope Dilution" />
            <ToolGrid label="Stope" cols={1} items={["greenA", "greenB", "greenC"]} />
          </GroupBody>
          <GroupTitle>Dilution</GroupTitle>
        </Group>
        <Group $w={54}>
          <GroupBody>
            <Cmd w={34} icon="search" a="Search" />
            <ToolGrid label="Proximity" cols={1} items={["plusBox", "rotBox", "tick"]} />
          </GroupBody>
          <GroupTitle>Proximity</GroupTitle>
        </Group>
        <Group $w={53}>
          <GroupBody $pad={8}>
            <ToolGrid label="Rock" cols={2} items={["rock", "arcs", "two", "", "tick"]} />
          </GroupBody>
          <GroupTitle>Rock Mech</GroupTitle>
        </Group>
        <Group $w={149}>
          <GroupBody $pad={2}>
            <Cmd w={30} icon="hole" a="Insert" b="1 Hole" />
            <Cmd w={29} icon="many" a="Insert" b="Many" />
            <Cmd w={31} icon="grid" a="Insert" b="Report" />
            <ToolGrid label="Blast" cols={3} items={["fuse", "clock", "stick", "stickClock", "angle", "rings", "a1in", "a1out", "tick"]} />
          </GroupBody>
          <GroupTitle>Drill/Blast Surface</GroupTitle>
        </Group>
        <Group $w={254}>
          <GroupBody $pad={1}>
            <Cmd w={34} icon="insert" a="Insert..." />
            <Cmd w={61} icon="naming" a="Naming holes" />
            <Cmd w={48} icon="load" a="Load holes" />
            <Cmd w={29} icon="delay" a="Delay" />
            <Cmd w={28} icon="erase" a="Erase" />
            <Cmd w={32} icon="report" a="Report" />
            <ToolGrid label="Drift" cols={1} items={["branches", "tick"]} />
          </GroupBody>
          <GroupTitle>Drift Drilling and Blasting</GroupTitle>
        </Group>
        <Group $w={207}>
          <GroupBody>
            <Cmd w={60} icon="pit" a="Pit" b="Optimization" />
            <Cmd w={72} icon="pitshell" a="Pitshell Visualizer" />
            <ToolGrid label="Pit" cols={4} items={["benchBlue", "benchRed", "benchGreen", "benchPurple", "raiseA", "raiseB", "tick"]} />
          </GroupBody>
          <GroupTitle>Pit Planning</GroupTitle>
        </Group>
        <TapePanel>
          <Svg s={24}>{big.tape}</Svg>
          <span>Tape an...</span>
          <Caret />
        </TapePanel>
      </Ribbon>

      <FileTabs>
        <FileTab $w={96}>Start</FileTab>
        <FileTab $w={128} $on>
          WEBINAR_DDB 2022*
          <svg width="6" height="6" viewBox="0 0 6 6"><path d="M0 0L6 6M6 0L0 6" stroke="#b4bac2" strokeWidth="1.200" /></svg>
        </FileTab>
        <FileTab $w={26} aria-label="New tab"><svg width="6" height="6" viewBox="0 0 6 6"><path d="M3 0V6M0 3H6" stroke="#b4bac2" /></svg></FileTab>
      </FileTabs>

      <Canvas>
        <CanvasBar>
          <ViewLabel>[−][Custom View][2D Wireframe]</ViewLabel>
          <WindowButtons>
            <button aria-label="Minimize drawing"><svg width="10" height="10" viewBox="0 0 10 10" fill="none" stroke="#555"><path d="M.5 5.500H9.500V8.500H.5Z" /></svg></button>
            <button aria-label="Restore drawing"><svg width="10" height="10" viewBox="0 0 10 10" fill="none" stroke="#555"><path d="M.5 .5H9.500V9.500H.5ZM3 3H7V7H3Z" /></svg></button>
            <button aria-label="Close drawing"><svg width="10" height="10" viewBox="0 0 10 10" fill="none" stroke="#555"><path d="M.5 .5H9.500V9.500H.5ZM2.500 2.500L7.500 7.500M7.500 2.500L2.500 7.500" strokeWidth="1.200" /></svg></button>
          </WindowButtons>
        </CanvasBar>

        <BlastPlan width="270" height="275" viewBox="0 0 270 275" fontFamily="Roboto, Lato, sans-serif" fontSize="7" fill="#000">
          <path d="M15 249H243V135L234 92L209 55L172 30L129 21L85 30L48 55L23 92L15 135Z" fill="none" stroke="#bb4df0" strokeWidth="1.300" />
          {holes.map((h) => <HoleMark key={h[3]} h={h} />)}
          <circle cx="129" cy="135" r="5.700" fill="none" stroke="#2ceefc" strokeWidth="1.300" />
          <circle cx="129" cy="135" r="1" fill="#2ceefc" />
          <text x="122" y="128">None</text>
          <text x="137" y="138">4.01m</text>
          <text x="129" y="155">50 mm</text>
        </BlastPlan>

        <ReportTable>
          <colgroup><col style={{ width: 183 }} /><col style={{ width: 56 }} /><col /></colgroup>
          <thead><tr><th colSpan={3}>REPORT_DDB</th></tr></thead>
          <tbody>
            {report.map(([name, unit, value, h], i) => (
              <ReportRow key={i} $h={h}><td>{name}</td><td>{unit}</td><td>{value}</td></ReportRow>
            ))}
          </tbody>
        </ReportTable>

        <Cube>TOP</Cube>
        <Compass width="68" height="8" viewBox="0 0 68 8" fill="none" stroke="#d8d8d8">
          <path d="M0 2.500H10M30 6.500H38M58 2.500H68" strokeDasharray="3 2" />
        </Compass>
        <UcsButton>Unnamed <svg width="6" height="5" viewBox="0 0 6 5" fill="none" stroke="#a5a8ae"><path d="M.5 .5H5.500L3 4Z" /></svg></UcsButton>

        <UcsIcon width="60" height="60" viewBox="0 0 60 60" fill="none" stroke="#444">
          <path d="M4.500 14V52.500H42" />
          <path d="M5 1L10 6L15 1M10 6V11M46 41L56 51M56 41L46 51" strokeWidth="1.200" />
        </UcsIcon>
        <Crosshair width="53" height="53" viewBox="0 0 53 53" fill="none" stroke="#333">
          <path d="M26.500 0V24M26.500 29V53M0 26.500H24M29 26.500H53" />
          <path d="M24.500 24.500H28.500V28.500H24.500Z" />
        </Crosshair>
      </Canvas>

      <LayoutTabs>
        <LayoutTab $w={44} $on>Model</LayoutTab>
        <LayoutTab $w={47}>Layout1</LayoutTab>
        <LayoutTab $w={47}>Layout2</LayoutTab>
        <LayoutTab $w={18} aria-label="New layout">+</LayoutTab>
      </LayoutTabs>

      <StatusBar>
        <StatusGroup><StatusText $w={137}>11.2633, 998.8636, 0.0000</StatusText></StatusGroup>
        <StatusGroup><StatusButton $w={36}>MODEL</StatusButton></StatusGroup>
        <StatusGroup><S k="grid" w={17} /><S k="snap" w={20} /><Drop /></StatusGroup>
        <StatusGroup>
          <S k="ortho" w={18} /><S k="polar" w={19} /><Drop w={14} /><S k="iso" w={15} /><Drop w={14} />
          <S k="track" w={17} on /><S k="osnap" w={20} /><Drop w={13} />
          <S k="trans" w={16} on /><Cell $w={2} /><S k="cycle" w={17} on /><S k="snap3d" w={21} /><Drop />
        </StatusGroup>
        <StatusGroup><S k="ucs" w={17} /><Drop w={14} /><S k="annoOn" w={17} on /><S k="anno" w={19} /><S k="annoA" w={16} />
          <StatusSelect $w={37}>
            <PlainSelect aria-label="Annotation scale"><option>1:1_1</option></PlainSelect><Caret s={6} />
          </StatusSelect>
        </StatusGroup>
        <StatusGroup><StatusButton $w={18} aria-label="Workspace settings"><Gear /></StatusButton><Drop w={14} /></StatusGroup>
        <StatusGroup><S k="plus" w={17} /></StatusGroup>
        <StatusGroup>
          <S k="ruler" w={18} />
          <StatusSelect $w={57}>
            <PlainSelect aria-label="Units"><option>Decimal</option></PlainSelect><Caret s={6} />
          </StatusSelect>
        </StatusGroup>
        <StatusGroup><S k="layers" w={18} /><StatusButton $w={34}>1.4000</StatusButton><S k="shapes" w={20} /></StatusGroup>
        <StatusGroup><S k="cad" w={18} /><S k="perf" w={20} /></StatusGroup>
        <StatusGroup><S k="full" w={18} /><S k="menu" w={11} /></StatusGroup>
      </StatusBar>
    </Page>
  );
}
